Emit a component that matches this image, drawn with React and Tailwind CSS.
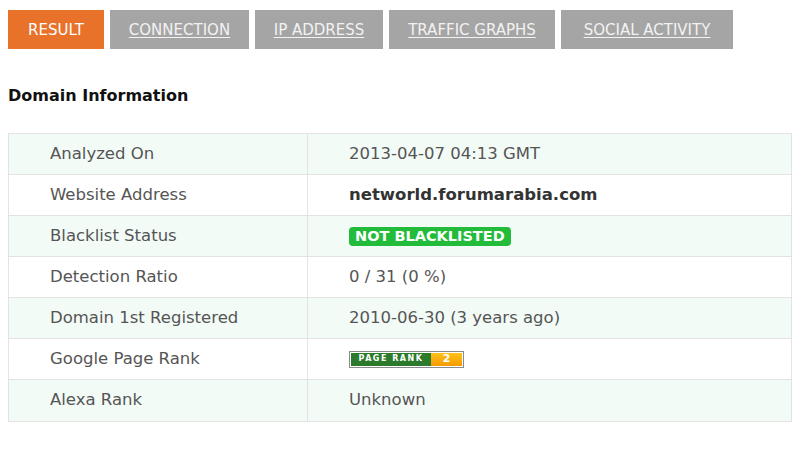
const tabs = [
    { label: "RESULT", active: true, w: "w-[96px]" },
    { label: "CONNECTION", w: "w-[139px]" },
    { label: "IP ADDRESS", w: "w-[128px]" },
    { label: "TRAFFIC GRAPHS", w: "w-[166px]" },
    { label: "SOCIAL ACTIVITY", w: "w-[172px]" },
];

const PageRank = () => (
    <div className="flex h-[17px] w-[115px] border border-[#8a8a8a] bg-white p-px">
        <div className="flex items-center justify-center w-[80px] bg-[#2c7a2c] text-white text-[8px] font-bold tracking-[1.5px]">
            PAGE RANK
        </div>
        <div className="flex items-center justify-center flex-1 bg-gradient-to-b from-[#ffc21a] to-[#f59a00] text-white text-[11px] font-bold">
            2
        </div>
    </div>
);

const rows = [
    { label: "Analyzed On", value: "2013-04-07 04:13 GMT" },
    { label: "Website Address", value: <span className="font-bold text-[#333]">networld.forumarabia.com</span> },
    {
        label: "Blacklist Status",
        value: (
            <span className="inline-block bg-[#22bb3a] text-white font-bold text-[14.5px] leading-[19px] px-[6px] rounded-[4px]">
                NOT BLACKLISTED
            </span>
        ),
    },
    { label: "Detection Ratio", value: "0 / 31 (0 %)" },
    { label: "Domain 1st Registered", value: "2010-06-30 (3 years ago)" },
    { label: "Google Page Rank", value: <PageRank /> },
    { label: "Alexa Rank", value: "Unknown" },
];

const App = () => {
    return (
        <div className="w-[800px] h-[450px] bg-white font-['DejaVu_Sans',sans-serif] px-2 pt-[10px]">
            <div className="flex gap-[6px]">
                {tabs.map((t) => (
                    <div
                        key={t.label}
                        className={`${t.w} h-[39px] flex items-center justify-center text-[15px] pt-[2px] ${
                            t.active
                                ? "bg-[#e8722a] text-white"
                                : "bg-[#a5a5a5] text-[#f2f2f2] underline underline-offset-2"
                        }`}
                    >
                        {t.label}
                    </div>
                ))}
            </div>

            <h2 className="mt-[39px] text-[16px] font-bold text-[#111] leading-none">Domain Information</h2>

            <div className="mt-[29px] w-[784px] border border-[#e3e3e3] text-[16.5px] text-[#555]">
                {rows.map((r, i) => (
                    <div
                        key={r.label}
                        className={`flex h-[41px] ${i < rows.length - 1 ? "border-b border-[#e3e3e3]" : ""} ${
                            i % 2 === 0 ? "bg-[#f3fbf7]" : "bg-white"
                        }`}
                    >
                        <div className="w-[299px] border-r border-[#e3e3e3] flex items-center pl-[41px]">{r.label}</div>
                        <div className="flex-1 flex items-center pl-[41px]">{r.value}</div>
                    </div>
                ))}
            </div>
        </div>
    );
};

export default App;
